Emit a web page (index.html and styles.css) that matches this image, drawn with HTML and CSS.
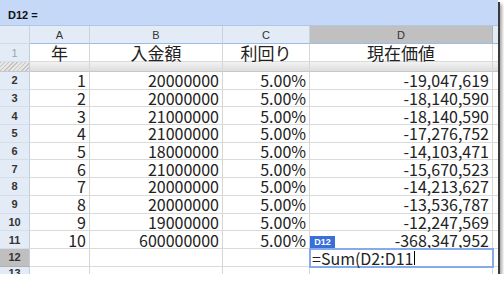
FILE: index.html
```html
<!DOCTYPE html>
<html lang="ja">
<head>
<meta charset="utf-8">
<link rel="stylesheet" href="styles.css">
</head>
<body>
<div class="frame">
  <div class="topbar">D12 =</div>
  <div class="sheet">
    <div class="ch corner"></div>
    <div class="ch">A</div>
    <div class="ch">B</div>
    <div class="ch">C</div>
    <div class="ch sel">D</div>
    <div class="ch last"></div>

    <div class="rh light">1</div>
    <div class="c hd">年</div>
    <div class="c hd">入金額</div>
    <div class="c hd">利回り</div>
    <div class="c hd">現在価値</div>
    <div class="c last"></div>

    <div class="rh hatch"></div>
    <div class="c split"></div>
    <div class="c split"></div>
    <div class="c split"></div>
    <div class="c split"></div>
    <div class="c split last"></div>

    <div class="rh">2</div><div class="c n">1</div><div class="c n">20000000</div><div class="c n">5.00%</div><div class="c n">-19,047,619</div><div class="c last"></div>
    <div class="rh">3</div><div class="c n">2</div><div class="c n">20000000</div><div class="c n">5.00%</div><div class="c n">-18,140,590</div><div class="c last"></div>
    <div class="rh">4</div><div class="c n">3</div><div class="c n">21000000</div><div class="c n">5.00%</div><div class="c n">-18,140,590</div><div class="c last"></div>
    <div class="rh">5</div><div class="c n">4</div><div class="c n">21000000</div><div class="c n">5.00%</div><div class="c n">-17,276,752</div><div class="c last"></div>
    <div class="rh">6</div><div class="c n">5</div><div class="c n">18000000</div><div class="c n">5.00%</div><div class="c n">-14,103,471</div><div class="c last"></div>
    <div class="rh">7</div><div class="c n">6</div><div class="c n">21000000</div><div class="c n">5.00%</div><div class="c n">-15,670,523</div><div class="c last"></div>
    <div class="rh">8</div><div class="c n">7</div><div class="c n">20000000</div><div class="c n">5.00%</div><div class="c n">-14,213,627</div><div class="c last"></div>
    <div class="rh">9</div><div class="c n">8</div><div class="c n">20000000</div><div class="c n">5.00%</div><div class="c n">-13,536,787</div><div class="c last"></div>
    <div class="rh">10</div><div class="c n">9</div><div class="c n">19000000</div><div class="c n">5.00%</div><div class="c n">-12,247,569</div><div class="c last"></div>
    <div class="rh">11</div><div class="c n">10</div><div class="c n">600000000</div><div class="c n">5.00%</div><div class="c n">-368,347,952</div><div class="c last"></div>

    <div class="rh selrow">12</div><div class="c"></div><div class="c"></div><div class="c"></div>
    <div class="c active">
      <span class="tag">D12</span>
      <div class="editor">=Sum(D2:D11<span class="caret"></span></div>
    </div>
    <div class="c last"></div>

    <div class="rh">13</div><div class="c"></div><div class="c"></div><div class="c"></div><div class="c"></div><div class="c last"></div>
  </div>
</div>
</body>
</html>
```

FILE: styles.css
```css
html, body {
  margin: 0;
  padding: 0;
  background: #ffffff;
}

.frame {
  width: 498px;
  height: 274px;
  overflow: hidden;
  background: #ffffff;
  box-shadow: 2px 2px 0 #3a3a3a, 4px 4px 3px rgba(0, 0, 0, 0.35);
  display: flex;
  flex-direction: column;
}

.topbar {
  height: 25px;
  flex: none;
  box-sizing: border-box;
  background: #c5d8f7;
  border-bottom: 1px solid #b3c6e4;
  font-family: "Liberation Sans", Arial, sans-serif;
  font-weight: bold;
  font-size: 11px;
  color: #111;
  display: flex;
  align-items: center;
  padding: 4px 0 0 8px;
  height: 26px;
}

.sheet {
  flex: 1;
  display: grid;
  grid-template-columns: 30px 60px 133px 87px 183px 1fr;
  grid-template-rows: 18px 18px 10px repeat(11, 17.7px) 1fr;
  font-family: "Noto Sans CJK JP", sans-serif;
  color: #222;
}

.sheet > div {
  box-sizing: border-box;
  min-width: 0;
  min-height: 0;
}

.ch {
  background: #e3ebf7;
  border-right: 1px solid #c9d3e0;
  border-bottom: 1px solid #9dbbe8;
  font-family: "Liberation Sans", Arial, sans-serif;
  font-size: 11px;
  color: #333;
  display: flex;
  align-items: center;
  justify-content: center;
}

.ch.corner {
  border-bottom: 1px solid #d2dae6;
}

.ch.sel {
  background: #c0c0c0;
  border-right-color: #b0b0b0;
}

.ch.last {
  border-right: none;
}

.rh {
  background: #e3ebf7;
  border-right: 1px solid #c3cddb;
  border-bottom: 1px solid #d5dde8;
  font-family: "Liberation Sans", Arial, sans-serif;
  font-weight: bold;
  font-size: 11px;
  color: #333;
  display: flex;
  align-items: center;
  justify-content: center;
}

.rh.light {
  font-weight: normal;
  color: #9aa3ad;
}

.rh.hatch {
  background: repeating-linear-gradient(135deg, #c4c4c4 0 1px, #e6e6e6 1px 3px);
  border-bottom: 1px solid #c8c8c8;
}

.rh.selrow {
  background: #bfbfbf;
  border-bottom-color: #b0b0b0;
}

.c {
  border-right: 1px solid #d6d6d6;
  border-bottom: 1px solid #dadada;
  display: flex;
  align-items: center;
  font-size: 16px;
  line-height: 1;
  white-space: nowrap;
}

.c.last {
  border-right: none;
}

.c.hd {
  justify-content: center;
  font-size: 17px;
  color: #222;
}

.c.split {
  background: linear-gradient(#f3f3f3, #dcdcdc);
  border-bottom: 1px solid #c8c8c8;
}

.c.n {
  justify-content: flex-end;
  padding-right: 3px;
}

.c.active {
  position: relative;
  overflow: visible;
}

.tag {
  position: absolute;
  left: 0;
  top: -13px;
  height: 13px;
  width: 25px;
  background: #3a6fd9;
  color: #ffffff;
  font-family: "Liberation Sans", Arial, sans-serif;
  font-weight: bold;
  font-size: 9px;
  line-height: 13px;
  text-align: center;
  z-index: 2;
}

.editor {
  position: absolute;
  left: -1px;
  top: -1px;
  width: 185px;
  height: 20px;
  box-sizing: border-box;
  border: 2px solid #86aaea;
  background: #ffffff;
  padding-left: 1px;
  display: flex;
  align-items: center;
  font-size: 16px;
  line-height: 1;
  color: #222;
  z-index: 2;
}

.caret {
  display: inline-block;
  width: 1px;
  height: 14px;
  background: #000;
  margin-left: 1px;
}
```
